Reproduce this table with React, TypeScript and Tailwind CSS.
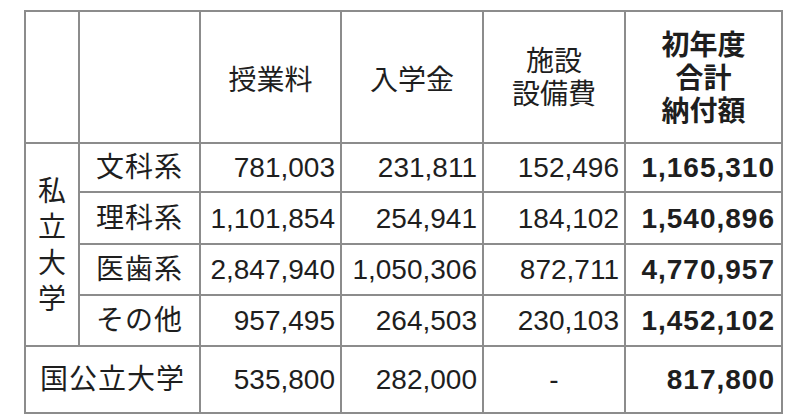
const rows = [
  { name: '文科系', fee: '781,003', entry: '231,811', facility: '152,496', total: '1,165,310', h: 'h-[49px]' },
  { name: '理科系', fee: '1,101,854', entry: '254,941', facility: '184,102', total: '1,540,896', h: 'h-[52px]' },
  { name: '医歯系', fee: '2,847,940', entry: '1,050,306', facility: '872,711', total: '4,770,957', h: 'h-[51px]' },
  { name: 'その他', fee: '957,495', entry: '264,503', facility: '230,103', total: '1,452,102', h: 'h-[51px]' },
];

const cell = 'border-2 border-[#8c8c8c] p-0';
const num = `${cell} text-right pr-[5px] whitespace-nowrap`;

export default function App() {
  return (
    <div className="w-[800px] h-[420px] bg-white pt-[10px] pl-[24px] text-[#1e1e1e] font-['Liberation_Sans','Noto_Sans_CJK_JP',sans-serif] text-[28px] leading-[33px]">
      <table className="border-collapse table-fixed w-[759px]">
        <colgroup>
          <col className="w-[54px]" />
          <col className="w-[121px]" />
          <col className="w-[141px]" />
          <col className="w-[142px]" />
          <col className="w-[142px]" />
          <col className="w-[157px]" />
        </colgroup>
        <thead>
          <tr className="h-[132px]">
            <th className={cell} />
            <th className={cell} />
            <th className={`${cell} font-normal pt-[6px]`}>授業料</th>
            <th className={`${cell} font-normal pt-[6px]`}>入学金</th>
            <th className={`${cell} font-normal pt-[2px]`}>
              施設
              <br />
              設備費
            </th>
            <th className={`${cell} font-bold pt-[2px]`}>
              初年度
              <br />
              合計
              <br />
              納付額
            </th>
          </tr>
        </thead>
        <tbody>
          {rows.map((r, i) => (
            <tr key={r.name} className={r.h}>
              {i === 0 && (
                <td rowSpan={4} className={`${cell} text-center`}>
                  <div className="flex flex-col items-center leading-[36px] pt-[2px]">
                    {['私', '立', '大', '学'].map((c) => (
                      <span key={c}>{c}</span>
                    ))}
                  </div>
                </td>
              )}
              <td className={`${cell} text-center tracking-[1px]`}>{r.name}</td>
              <td className={num}>{r.fee}</td>
              <td className={num}>{r.entry}</td>
              <td className={num}>{r.facility}</td>
              <td className={`${num} font-bold tracking-[1px] pr-[6px]`}>{r.total}</td>
            </tr>
          ))}
          <tr className="h-[67px]">
            <td colSpan={2} className={`${cell} text-center tracking-[1px]`}>国公立大学</td>
            <td className={num}>535,800</td>
            <td className={num}>282,000</td>
            <td className={`${cell} text-center`}>-</td>
            <td className={`${num} font-bold tracking-[1px] pr-[6px]`}>817,800</td>
          </tr>
        </tbody>
      </table>
    </div>
  );
}
